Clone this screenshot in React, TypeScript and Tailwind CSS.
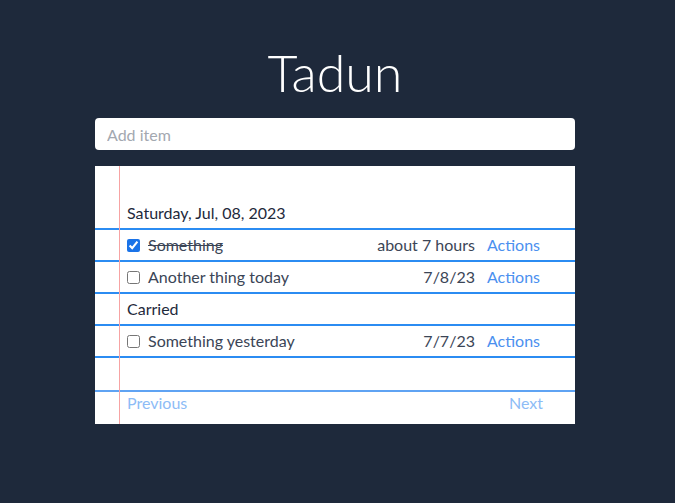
import { useState } from "react";

type Item = {
  id: number;
  text: string;
  done: boolean;
  when: string;
};

const today: Item[] = [
  { id: 1, text: "Something", done: true, when: "about 7 hours" },
  { id: 2, text: "Another thing today", done: false, when: "7/8/23" },
];

const carried: Item[] = [{ id: 3, text: "Something yesterday", done: false, when: "7/7/23" }];

function ItemRow({ item, onToggle }: { item: Item; onToggle: (id: number) => void }) {
  return (
    <div className="flex items-center h-[32px] border-b-2 border-[#2b8cf2] pl-[32px] pr-[35px]">
      <input
        type="checkbox"
        checked={item.done}
        onChange={() => onToggle(item.id)}
        className="w-[13px] h-[13px] m-0 accent-[#1a73e8]"
      />
      <span className={`ml-[8px] flex-1 text-[#3b4556] ${item.done ? "line-through" : ""}`}>{item.text}</span>
      <span className="text-[#3b4556]">{item.when}</span>
      <button className="ml-[12px] text-[#4b90ef]">Actions</button>
    </div>
  );
}

export default function App() {
  const [items, setItems] = useState({ today, carried });

  function toggle(id: number) {
    setItems({
      today: items.today.map((i) => (i.id === id ? { ...i, done: !i.done } : i)),
      carried: items.carried.map((i) => (i.id === id ? { ...i, done: !i.done } : i)),
    });
  }

  return (
    <div className="min-h-screen bg-[#1e293b] font-['Lato',sans-serif] text-[16px] pr-[5px]">
      <div className="w-[480px] mx-auto pt-[45px]">
        <h1 className="text-center text-[52px] leading-[54px] font-light text-white">Tadun</h1>
        <input
          placeholder="Add item"
          className="mt-[19px] w-full h-[32px] rounded-[4px] bg-white px-[12px] text-[#374151] placeholder:text-[#a3a8b0] outline-none"
        />

        <div className="relative mt-[16px] bg-white">
          <div className="absolute top-0 bottom-0 left-[24px] w-px bg-[#f7a3a3]" />

          <div className="h-[32px]" />
          <div className="flex items-center h-[32px] border-b-2 border-[#2b8cf2] pl-[32px] text-[#1e293b]">
            Saturday, Jul, 08, 2023
          </div>
          {items.today.map((item) => (
            <ItemRow key={item.id} item={item} onToggle={toggle} />
          ))}
          <div className="flex items-center h-[32px] border-b-2 border-[#2b8cf2] pl-[32px] text-[#1e293b]">
            Carried
          </div>
          {items.carried.map((item) => (
            <ItemRow key={item.id} item={item} onToggle={toggle} />
          ))}
          <div className="h-[34px] border-b-2 border-[#5fa3f3]" />
          <div className="flex items-start justify-between h-[32px] leading-[22px] pl-[32px] pr-[32px] text-[#8dbcf6]">
            <button>Previous</button>
            <button>Next</button>
          </div>
        </div>
      </div>
    </div>
  );
}
